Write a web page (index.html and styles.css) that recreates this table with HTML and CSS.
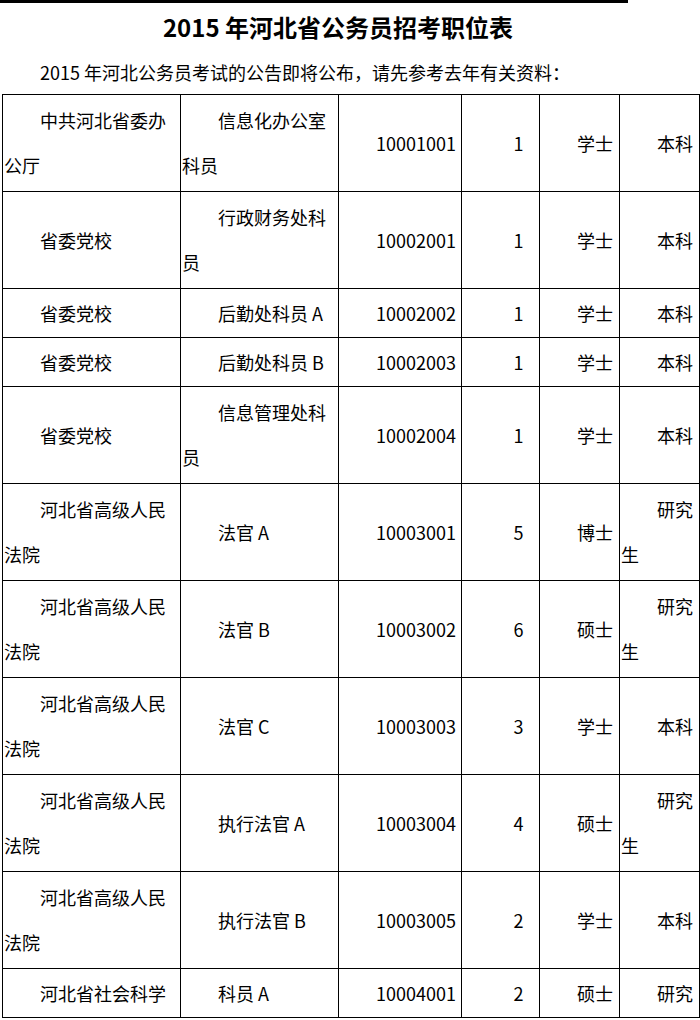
FILE: index.html
```html
<!DOCTYPE html>
<html lang="zh-CN">
<head>
<meta charset="utf-8">
<title>2015年河北省公务员招考职位表</title>
<link rel="stylesheet" href="styles.css">
</head>
<body>
<div class="page">
  <div class="topbar"></div>
  <h1 class="title">2015 年河北省公务员招考职位表</h1>
  <p class="intro">2015 年河北公务员考试的公告即将公布，请先参考去年有关资料：</p>
  <table class="jobs">
    <colgroup>
      <col class="c1"><col class="c2"><col class="c3"><col class="c4"><col class="c5"><col class="c6">
    </colgroup>
    <tbody>
      <tr class="two"><td>中共河北省委办公厅</td><td>信息化办公室科员</td><td>10001001</td><td class="num">1</td><td>学士</td><td>本科</td></tr>
      <tr class="two"><td>省委党校</td><td>行政财务处科员</td><td>10002001</td><td class="num">1</td><td>学士</td><td>本科</td></tr>
      <tr class="one"><td>省委党校</td><td>后勤处科员 A</td><td>10002002</td><td class="num">1</td><td>学士</td><td>本科</td></tr>
      <tr class="one"><td>省委党校</td><td>后勤处科员 B</td><td>10002003</td><td class="num">1</td><td>学士</td><td>本科</td></tr>
      <tr class="two"><td>省委党校</td><td>信息管理处科员</td><td>10002004</td><td class="num">1</td><td>学士</td><td>本科</td></tr>
      <tr class="two"><td>河北省高级人民法院</td><td>法官 A</td><td>10003001</td><td class="num">5</td><td>博士</td><td>研究生</td></tr>
      <tr class="two"><td>河北省高级人民法院</td><td>法官 B</td><td>10003002</td><td class="num">6</td><td>硕士</td><td>研究生</td></tr>
      <tr class="two"><td>河北省高级人民法院</td><td>法官 C</td><td>10003003</td><td class="num">3</td><td>学士</td><td>本科</td></tr>
      <tr class="two"><td>河北省高级人民法院</td><td>执行法官 A</td><td>10003004</td><td class="num">4</td><td>硕士</td><td>研究生</td></tr>
      <tr class="two"><td>河北省高级人民法院</td><td>执行法官 B</td><td>10003005</td><td class="num">2</td><td>学士</td><td>本科</td></tr>
      <tr class="one"><td>河北省社会科学</td><td>科员 A</td><td>10004001</td><td class="num">2</td><td>硕士</td><td>研究</td></tr>
    </tbody>
  </table>
</div>
</body>
</html>
```

FILE: styles.css
```css
html, body {
  margin: 0;
  padding: 0;
  background: #fff;
}

body {
  font-family: "Noto Sans CJK SC", "Noto Sans", sans-serif;
  color: #000;
  overflow: hidden;
}

.page {
  width: 700px;
}

.topbar {
  width: 628px;
  height: 3px;
  background: #000;
}

.title {
  width: 676px;
  margin: 8px 0 0;
  font-size: 24px;
  line-height: 32px;
  font-weight: bold;
  text-align: center;
}

.intro {
  margin: 14px 0 0;
  padding-left: 40px;
  font-size: 18px;
  line-height: 30px;
}

.jobs {
  margin: 7px 0 0 2px;
  width: 697px;
  table-layout: fixed;
  border-collapse: collapse;
  font-size: 18px;
  line-height: 45px;
}

.c1 { width: 178px; }
.c2 { width: 158px; }
.c3 { width: 123px; }
.c4 { width: 78px; }
.c5 { width: 80px; }
.c6 { width: 80px; }

.jobs td {
  border: 1px solid #000;
  padding: 0 1px;
  text-indent: 2em;
  text-align: left;
  vertical-align: middle;
}

.jobs td.num {
  text-align: center;
}

.jobs tr.two { height: 97px; }
.jobs tr.one { height: 49px; }
```
